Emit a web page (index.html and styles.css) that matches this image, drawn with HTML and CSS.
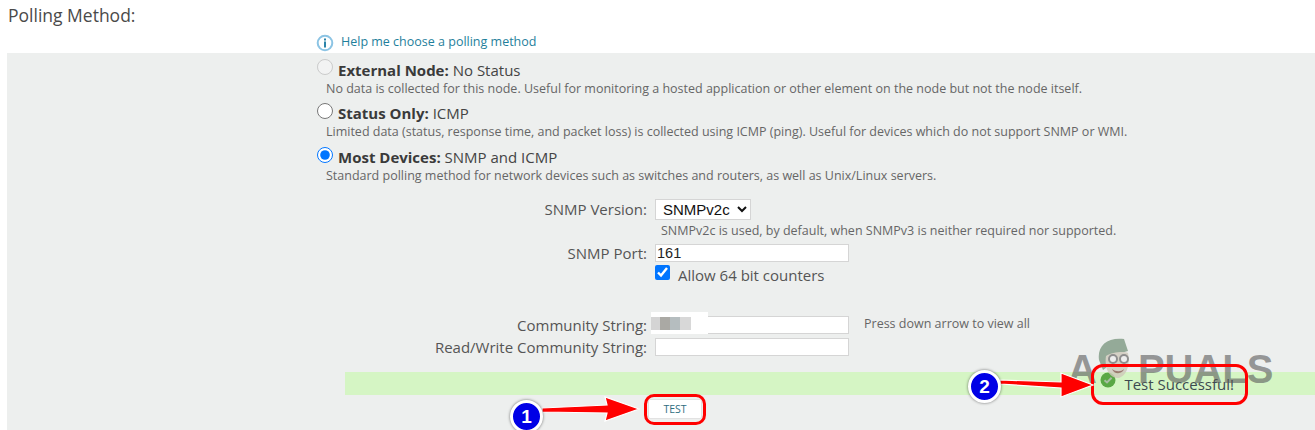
FILE: index.html
```html
<!DOCTYPE html>
<html lang="en">
<head>
<meta charset="utf-8">
<title>Polling Method</title>
<link rel="stylesheet" href="styles.css">
</head>
<body>
<div class="page">
  <h2 class="title">Polling Method:</h2>
  <div class="help">
    <svg class="help-icon" width="18" height="18" viewBox="0 0 18 18"><circle cx="9" cy="9" r="7.3" fill="#fff" stroke="#8cc4e4" stroke-width="2"/><rect x="8" y="7.5" width="2" height="6" fill="#2b83a8"/><rect x="8" y="4.5" width="2" height="2" fill="#2b83a8"/></svg>
    <a class="help-link">Help me choose a polling method</a>
  </div>
  <div class="panel">
    <div class="options">
      <div class="option option-first">
        <div class="option-head"><input class="radio" type="radio" name="poll" disabled><span class="option-title"><b>External Node:</b> No Status</span></div>
        <div class="option-desc">No data is collected for this node. Useful for monitoring a hosted application or other element on the node but not the node itself.</div>
      </div>
      <div class="option">
        <div class="option-head"><input class="radio" type="radio" name="poll"><span class="option-title"><b>Status Only:</b> ICMP</span></div>
        <div class="option-desc">Limited data (status, response time, and packet loss) is collected using ICMP (ping). Useful for devices which do not support SNMP or WMI.</div>
      </div>
      <div class="option">
        <div class="option-head"><input class="radio" type="radio" name="poll" checked><span class="option-title"><b>Most Devices:</b> SNMP and ICMP</span></div>
        <div class="option-desc">Standard polling method for network devices such as switches and routers, as well as Unix/Linux servers.</div>
      </div>
    </div>
    <div class="form">
      <label class="label row-version">SNMP Version:</label>
      <div class="row-version"><select class="select"><option>SNMPv2c</option></select></div>
      <div class="hint">SNMPv2c is used, by default, when SNMPv3 is neither required nor supported.</div>
      <label class="label row-port">SNMP Port:</label>
      <div class="row-port"><input class="text" type="text" value="161"></div>
      <div class="check-row"><input class="check" type="checkbox" checked><span>Allow 64 bit counters</span></div>
      <label class="label row-community">Community String:</label>
      <div class="row-community community">
        <span class="field-wrap"><input class="text" type="text"><span class="blur"><i class="b1"></i><i class="b2"></i><i class="b3"></i><i class="b4"></i></span></span>
        <span class="note">Press down arrow to view all</span>
      </div>
      <label class="label">Read/Write Community String:</label>
      <div><input class="text" type="text"></div>
    </div>
    <div class="success"><svg class="ok" width="16" height="16" viewBox="0 0 16 16"><circle cx="8" cy="8" r="7.5" fill="#5aa845"/><path d="M4.5 8.2 7 10.4l4.6-4.6" fill="none" stroke="#a9bda3" stroke-width="2"/></svg><span>Test Successful!</span></div>
    <div class="test-row"><button class="test">TEST</button></div>
  </div>

  <div class="watermark"><span class="wm-a">A</span><svg class="wm-face" width="44" height="52" viewBox="0 0 44 52"><path d="M6 26C4 12 14 3 31 5l4 12-7 2c-6 2-14 3-14 14l-4 3z" fill="#7f9a83"/><path d="M13 22c6-4 18-5 22-3 2 10 0 22-9 25-9 1-15-9-13-22z" fill="#cfc9bb"/><circle cx="20" cy="25" r="4" fill="#eee" stroke="#777" stroke-width="2"/><circle cx="31" cy="25" r="4" fill="#eee" stroke="#777" stroke-width="2"/><path d="M19 35c4 3 9 3 12 0-1 5-10 6-12 0z" fill="#8a5f55"/></svg><span class="wm-rest">PUALS</span></div>

  <div class="ring ring-test"></div>
  <div class="ring ring-ok"></div>
  <svg class="arrow arrow-1" width="100" height="28" viewBox="0 0 100 28"><path d="M1 12 L66 9 L64 1 L98 13 L64 25 L66 17 L1 16z" fill="#f00" stroke="#fff" stroke-width="1.2"/></svg>
  <svg class="arrow arrow-2" width="96" height="28" viewBox="0 0 96 28"><path d="M1 10 L62 12 L62 3 L94 15 L62 27 L62 18 L1 14z" fill="#f00" stroke="#fff" stroke-width="1.2"/></svg>
  <div class="badge badge-1">1</div>
  <div class="badge badge-2">2</div>
</div>
</body>
</html>
```
FILE: styles.css
```css
* { box-sizing: border-box; }
html, body { margin: 0; height: 430px; overflow: hidden; background: #fff; }
body { font-family: "Open Sans", sans-serif; color: #444; }
.page { position: relative; width: 1315px; height: 430px; overflow: hidden; }
.title { margin: 0; padding: 4px 0 0 8px; height: 31px; font-size: 17.5px; line-height: 23px; font-weight: 400; color: #4a4a4a; }
.help { display: flex; align-items: center; height: 22px; padding-left: 316px; }
.help-icon { flex: none; margin-top: 2px; }
.help-link { margin-left: 7px; font-size: 12.5px; line-height: 16px; color: #1f7f9c; }
.panel { margin-left: 7px; height: 377px; background: #edefee; padding-top: 6px; }
.options { padding-left: 310px; }
.option { height: 44px; }
.option-first { height: 43px; }
.option-head { display: flex; align-items: flex-start; height: 21px; }
.radio { width: 16px; height: 16px; margin: 1px 5px 0 0; flex: none; }
.option-first .radio { margin-top: 0; }
.option-title { font-size: 15px; line-height: 22px; color: #444; }
.option-title b { font-weight: 700; color: #3a3a3a; }
.option-desc { padding-left: 9px; font-size: 12.5px; line-height: 17px; color: #666; white-space: nowrap; }
.form { display: grid; grid-template-columns: 640px 1fr; column-gap: 8px; margin-top: 8px; align-items: center; }
.label { grid-column: 1; text-align: right; line-height: 22px; color: #555; font-size: 15px; white-space: nowrap; }
.select { width: 96px; height: 21px; font-family: "Liberation Sans", sans-serif; font-size: 15px; color: #111; border: 1px solid #d5d5d5; background-color: #fff; border-radius: 0; padding: 0 0 0 3px; display: block; }
.hint { grid-column: 2; padding-left: 6px; font-size: 12.5px; line-height: 22px; color: #666; }
.text { display: block; width: 194px; height: 18px; border: 1px solid #d5d5d5; background: #fff; padding: 0 1px; font-family: "Liberation Sans", sans-serif; font-size: 14.5px; color: #222; border-radius: 0; }
.check-row { grid-column: 2; display: flex; align-items: flex-start; height: 50px; font-size: 15px; color: #555; line-height: 23px; }
.check { width: 15px; height: 15px; margin: 1px 8px 0 0; flex: none; }
.community { display: flex; align-items: center; }
.field-wrap { position: relative; display: block; }
.blur { position: absolute; left: -4px; top: -4px; display: flex; width: 57px; height: 22px; background: #fff; align-items: center; }
.blur i { display: block; height: 13px; }
.b1 { width: 9px; background: #d4d4d4; }
.b2 { width: 10px; background: #aaa9a4; }
.b3 { width: 10px; background: #b5bdbf; }
.b4 { width: 11px; background: #d8d8d8; }
.note { margin-left: 15px; font-size: 12.5px; line-height: 16px; color: #666; margin-top: -2px; white-space: nowrap; }
.success { display: flex; align-items: center; justify-content: flex-end; gap: 8px; margin: 14px 0 0 338px; height: 23px; background: #d5f5c4; padding-right: 81px; font-size: 15px; color: #3d4a50; position: relative; }
.ok { flex: none; margin-top: -8px; }
.test-row { padding: 4px 0 0 641px; }
.test { display: block; width: 54px; height: 20px; border: 1px solid #e2e2e2; background: #fff; font-family: "Open Sans", sans-serif; font-size: 10.5px; color: #2f6e80; padding: 0; border-radius: 2px; }
.watermark { position: absolute; left: 1068px; top: 337px; height: 60px; display: flex; align-items: flex-end; font-family: "Liberation Sans", sans-serif; font-weight: 700; font-size: 40px; line-height: 50px; color: rgba(90, 90, 90, 0.6); pointer-events: none; }
.wm-a { position: relative; top: -3px; }
.wm-face { position: absolute; left: 25px; top: -3px; opacity: .8; }
.wm-rest { position: relative; top: -3px; margin-left: 41px; }
.ring { position: absolute; border: 3px solid #f00; background: transparent; }
.ring-test { left: 644px; top: 394px; width: 62px; height: 31px; border-radius: 10px; }
.ring-ok { left: 1091px; top: 364px; width: 157px; height: 41px; border-radius: 12px; }
.arrow { position: absolute; }
.arrow-1 { left: 541px; top: 396px; }
.arrow-2 { left: 999px; top: 370px; }
.badge { position: absolute; width: 33px; height: 33px; border-radius: 50%; background: #0000e6; border: 3px solid #fff; color: #fff; font-family: "Liberation Sans", sans-serif; font-weight: 700; font-size: 19px; line-height: 27px; text-align: center; box-shadow: 0 0 3px rgba(0,0,0,.55); }
.badge-1 { left: 510px; top: 400px; }
.badge-2 { left: 968px; top: 370px; }
```
